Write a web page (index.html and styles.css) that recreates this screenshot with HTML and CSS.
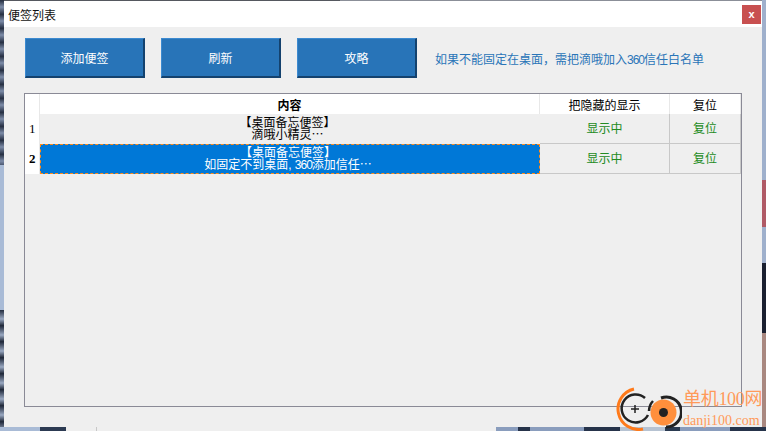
FILE: index.html
```html
<!DOCTYPE html>
<html lang="zh-CN">
<head>
    <meta charset="UTF-8">
    <title>便签列表</title>
    <link rel="stylesheet" href="styles.css">
</head>
<body>

    <div class="window">
        <header class="titlebar">
            <span class="title">便签列表</span>
            <button class="close">x</button>
        </header>

        <main class="content">
            <div class="toolbar">
                <button class="btn">添加便签</button>
                <button class="btn">刷新</button>
                <button class="btn">攻略</button>
                <p class="notice">如果不能固定在桌面，需把滴哦加入<span class="num">360</span>信任白名单</p>
            </div>

            <div class="grid-box">
                <table class="grid">
                    <thead>
                        <tr>
                            <th class="row-head"></th>
                            <th class="col-text">内容</th>
                            <th class="col-show">把隐藏的显示</th>
                            <th class="col-reset">复位</th>
                        </tr>
                    </thead>
                    <tbody>
                        <tr>
                            <td class="row-head">1</td>
                            <td class="note">【桌面备忘便签】<br>滴哦小精灵⋯</td>
                            <td class="action">显示中</td>
                            <td class="action">复位</td>
                        </tr>
                        <tr>
                            <td class="row-head current">2</td>
                            <td class="note selected">【桌面备忘便签】<br>如固定不到桌面, <span class="num">360</span>添加信任⋯</td>
                            <td class="action">显示中</td>
                            <td class="action">复位</td>
                        </tr>
                    </tbody>
                </table>
            </div>
        </main>
    </div>

    <!-- watermark over the window corner -->
    <div class="watermark">
        <svg class="logo" width="72" height="46" viewBox="0 0 72 46">
            <path d="M24 4 A20 20 0 0 0 33 44" fill="none" stroke="#ff7a1a" stroke-width="3"/>
            <path d="M35 13 A14 14 0 1 0 38 30" fill="none" stroke="#222" stroke-width="2.5"/>
            <path d="M21 24 H29 M25 20 V28" stroke="#222" stroke-width="1.5"/>
            <circle cx="53.5" cy="27.5" r="13" fill="#ff8f3c"/>
            <path d="M51 13 A15 15 0 1 1 56 42" fill="none" stroke="#222" stroke-width="3"/>
            <path d="M43 16 A15 15 0 0 0 39 26" fill="none" stroke="#222" stroke-width="2.5"/>
            <circle cx="53.5" cy="27.5" r="4.5" fill="#222"/>
        </svg>
        <div class="mark-text">
            <span class="mark-cn">单机100网</span>
            <span class="mark-url">danji100.com</span>
        </div>
    </div>

</body>
</html>
```

FILE: styles.css
```css
/* Desktop behind the window */
html, body {
    height: 100%;
}

body {
    position: relative;
    box-sizing: border-box;
    width: 766px;
    height: 431px;
    margin: 0;
    padding: 1px 4px 4px;
    overflow: hidden;
    font-family: "Liberation Sans", "Noto Sans CJK SC", sans-serif;
    font-size: 12px;
    background-color: #a9bbd6;
    background-image:
        linear-gradient(90deg, #a9bbd6 0 40px, #2c3a52 40px 66px, #efefef 66px 96px, #c8c8c8 96px 97px, #efefef 97px 496px, #8a9dbd 496px 518px, #26334a 518px 530px, #8a9dbd 530px 584px, #26334a 584px 620px, #b7c3d2 620px 665px, #2a3a50 665px 680px, #8a9dbd 680px 730px, #26334a 730px 766px),
        linear-gradient(180deg, #9fb0cc 0 180px, #b05a66 180px 227px, #9fb0cc 227px 263px, #1a2030 263px 333px, #a98880 333px 431px),
        repeating-linear-gradient(180deg, #232c3e 0, #7d8ca8 7px, #2a3448 14px),
        repeating-linear-gradient(180deg, #232c3e 0, #9aa9c2 9px, #1a2232 16px),
        linear-gradient(90deg, #55585f 0 340px, #8b8f98 340px 766px);
    background-size: 766px 4px, 4px 431px, 4px 165px, 4px 121px, 766px 1px;
    background-position: 0 427px, 762px 0, 0 0, 0 310px, 0 0;
    background-repeat: no-repeat;
}

/* Window */
.window {
    display: flex;
    flex-direction: column;
    height: 426px;
    background-color: #efefef;
}

.titlebar {
    display: flex;
    align-items: center;
    justify-content: space-between;
    height: 26px;
    padding: 0 1px 0 4px;
    background-color: white;
}

.title {
    color: #111;
}

.close {
    width: 19px;
    height: 19px;
    margin-top: 1px;
    padding: 0;
    border: none;
    background-color: #c85050;
    color: white;
    font-family: "Liberation Sans", sans-serif;
    font-size: 11px;
    font-weight: bold;
    line-height: 17px;
}

.content {
    flex: 1;
    padding: 11px 20px 20px;
}

/* Buttons row */
.toolbar {
    display: flex;
    align-items: center;
    gap: 16px;
    height: 40px;
    padding-left: 1px;
}

.btn {
    box-sizing: border-box;
    width: 120px;
    height: 40px;
    padding: 0;
    border-style: solid;
    border-width: 1px 2px 2px 1px;
    border-color: #3c8ad0 #14426e #14426e #3c8ad0;
    background-color: #2874b8;
    color: white;
    font-family: inherit;
    font-size: 12px;
}

.notice {
    margin: 0 0 0 2px;
    color: #2a75b8;
}

.num {
    letter-spacing: -1px;
}

/* Table */
.grid-box {
    box-sizing: border-box;
    height: 314px;
    margin-top: 15px;
    border: 1px solid #8a8a96;
}

.grid {
    border-collapse: separate;
    border-spacing: 0;
    table-layout: fixed;
    width: 716px;
}

.grid th {
    height: 20px;
    padding: 0;
    background-color: white;
    border-right: 1px solid #e8e8e8;
    color: black;
    font-size: 12px;
    font-weight: normal;
}

.grid .col-text {
    width: 499px;
    font-weight: bold;
}

.grid td {
    height: 29px;
    padding: 0;
    border-right: 1px solid #c8c8c8;
    border-bottom: 1px solid #c8c8c8;
    text-align: center;
    line-height: 12px;
}

.grid .row-head {
    box-sizing: border-box;
    width: 15px;
    padding-left: 4px;
    background-color: white;
    border-right: 1px solid #e8e8e8;
    border-bottom: none;
    text-align: left;
    font-family: "Liberation Serif", serif;
    font-size: 13px;
}

.grid .current {
    font-weight: bold;
}

.col-show {
    width: 129px;
}

.grid .note {
    padding-right: 4px;
    border-right: 1px solid #efefef;
    border-bottom: none;
    color: black;
}

.grid .selected {
    box-sizing: border-box;
    border: 1px dashed #ff8a1a;
    background-color: #0078d7;
    color: white;
}

.action {
    color: #228b22;
}

/* Watermark */
.watermark {
    position: absolute;
    left: 610px;
    top: 385px;
    display: flex;
}

.mark-text {
    display: flex;
    flex-direction: column;
    margin-left: 1px;
    padding-top: 5px;
    color: #ff9a5a;
    font-family: "Liberation Serif", "Noto Sans CJK SC", serif;
}

.mark-cn {
    font-size: 18px;
    line-height: 19px;
    letter-spacing: -0.3px;
    white-space: nowrap;
}

.mark-url {
    margin-top: 4px;
    font-size: 14px;
    line-height: 15px;
}
```
